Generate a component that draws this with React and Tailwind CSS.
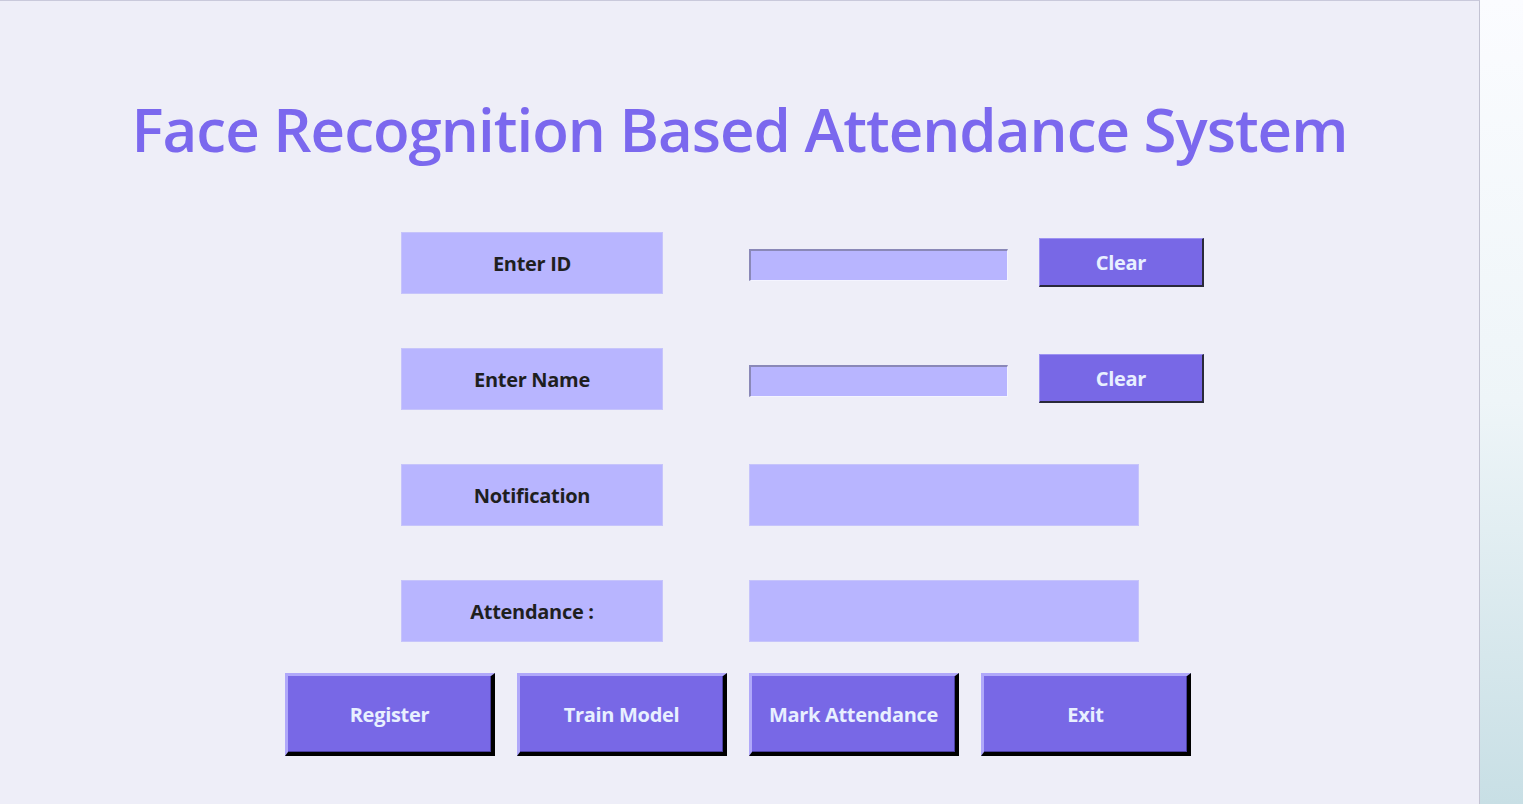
import React from 'react'

const fieldRows = [
  { label: 'Enter ID', kind: 'entry' },
  { label: 'Enter Name', kind: 'entry' },
  { label: 'Notification', kind: 'box' },
  { label: 'Attendance :', kind: 'box' },
]

const actions = ['Register', 'Train Model', 'Mark Attendance', 'Exit']

const App = () => {
  return (
    <div className="flex h-[804px] w-[1523px] overflow-hidden" style={{ fontFamily: '"Open Sans", "Noto Sans", sans-serif' }}>
      {/* Main window */}
      <div className="flex w-[1480px] flex-col border-t border-r border-t-[#c9c9db] border-r-[#c3c3d3] bg-[#eeeef8]">
        <h1 className="mt-[86px] text-center text-[60px] font-semibold leading-[84px] tracking-[-1px] text-[#7b68ee]">
          Face Recognition Based Attendance System
        </h1>

        <div className="mt-[61px] flex flex-col gap-[54px] pl-[401px]">
          {fieldRows.map((row) => (
            <div key={row.label} className="flex items-center">
              <div className="flex h-[62px] w-[262px] items-center justify-center border border-[#c6c4fb] bg-[#b8b5ff] pt-[2px] text-[20px] font-bold tracking-[-0.3px] text-[#1f1f1f]">
                {row.label}
              </div>
              {row.kind === 'entry' ? (
                <div className="ml-[86px] flex items-center">
                  <div className="mt-[3px] h-[32px] w-[259px] border-t-2 border-l-2 border-b border-r border-t-[#8a88b8] border-l-[#8a88b8] border-b-[#f4f4ff] border-r-[#f4f4ff] bg-[#b8b5ff]" />
                  <button className="ml-[31px] mb-[2px] flex h-[49px] w-[165px] items-center justify-center border-t border-l border-b-2 border-r-2 border-t-[#9d92f2] border-l-[#9d92f2] border-b-[#2a2a3a] border-r-[#2a2a3a] bg-[#7868e6] pt-[2px] text-[20px] font-bold tracking-[-0.3px] text-[#e8f0ff]">
                    Clear
                  </button>
                </div>
              ) : (
                <div className="ml-[86px] h-[62px] w-[390px] border border-[#c6c4fb] bg-[#b8b5ff]" />
              )}
            </div>
          ))}
        </div>

        <div className="mt-[31px] flex gap-[22px] pl-[285px]">
          {actions.map((name) => (
            <button
              key={name}
              className="flex h-[83px] w-[210px] items-center justify-center border-t-[3px] border-l-[3px] border-b-[4px] border-r-[4px] border-t-[#b0a8fa] border-l-[#b0a8fa] border-b-black border-r-black bg-[#7868e6] pt-[2px] text-[20px] font-bold tracking-[-0.3px] text-[#e8f0ff] shadow-[inset_-1px_-1px_0_#4a3fa0]"
            >
              {name}
            </button>
          ))}
        </div>
      </div>

      {/* Desktop strip on the right */}
      <div className="flex-1 bg-gradient-to-b from-[#fbfcff] via-[#eef5f8] to-[#c8dfe5]" />
    </div>
  )
}

export default App
